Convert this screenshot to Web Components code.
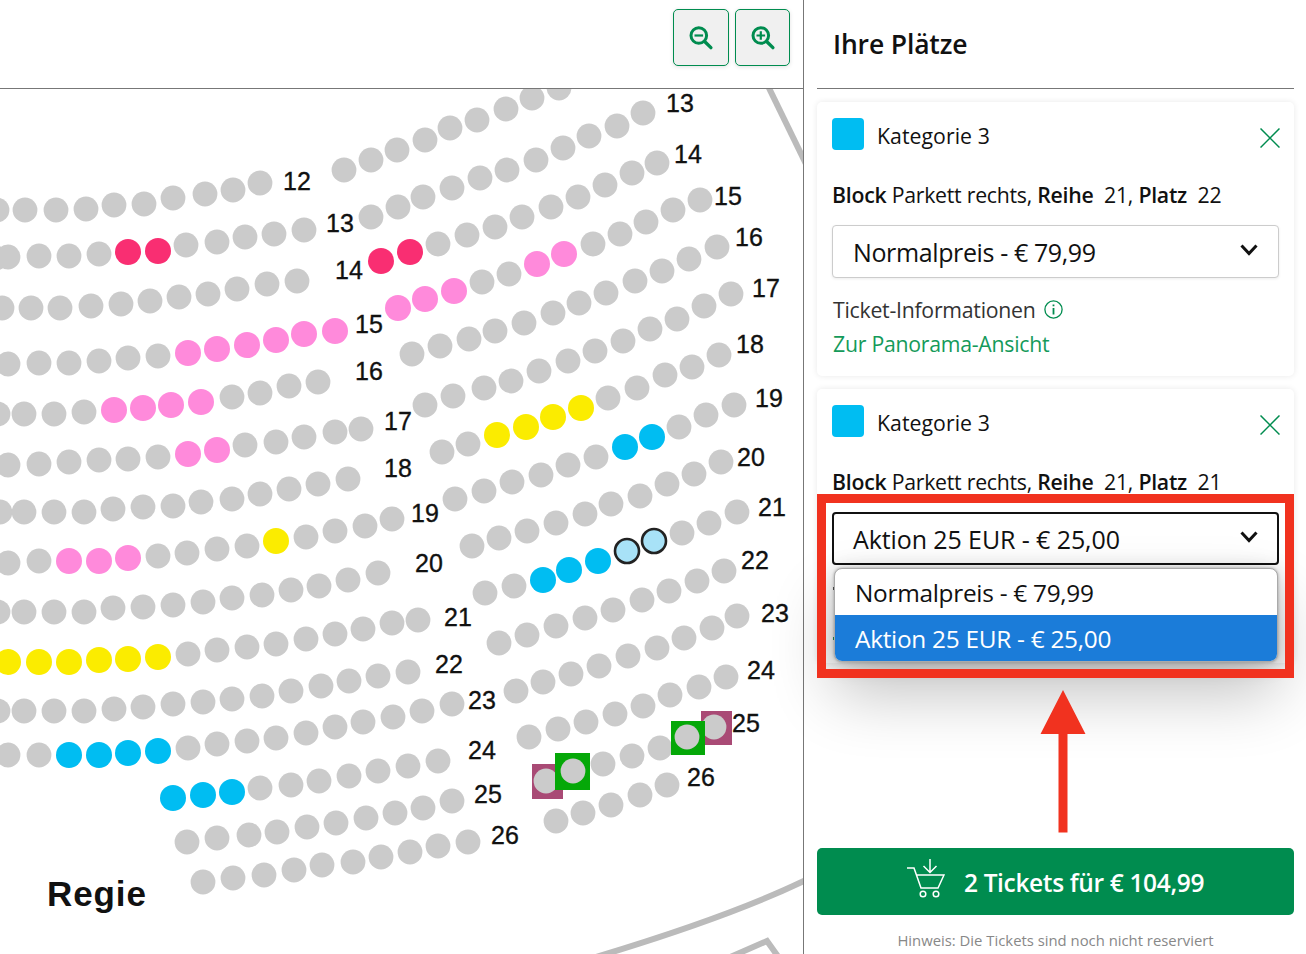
<!DOCTYPE html>
<html lang="de">
<head>
<meta charset="utf-8">
<title>Ihre Plätze</title>
<style>
    html, body { margin: 0; height: 100%; background: #fff; overflow: hidden; }
    body { font-family: "Open Sans", "Noto Sans", sans-serif; color: #111; }
</style>
</head>
<body>
<ticket-page>
    <seat-map slot="map"></seat-map>
    <zoom-toolbar slot="toolbar"></zoom-toolbar>
    <seat-panel slot="panel">
        <ticket-card block="Parkett rechts" row="21" seat="22" price="Normalpreis - € 79,99"></ticket-card>
        <ticket-card block="Parkett rechts" row="21" seat="21" price="Aktion 25 EUR - € 25,00" open></ticket-card>
    </seat-panel>
    <red-callout slot="callout"></red-callout>
</ticket-page>

<script>
// Seat rows of the hall plan. Suffix on a seat: r red, p pink, y yellow, b blue, s selected
const SEAT_ROWS = [
    // left block
    '-3,210 25,210 56,210 86,209 114,205 144,204 173,198 205,194 233,190 260,183',
    '-4,258 8,257 39,256 69,256 99,254 128,252r 158,251r 186,245 217,242 245,237 274,234 304,230',
    '2,308 31,308 60,308 91,306 121,304 150,301 179,297 208,294 237,289 267,284 297,281',
    '8,364 39,363 69,363 99,361 128,358 158,356 188,353p 217,349p 247,345p 276,340p 304,334p 335,331p',
    '-2,414 24,414 54,414 84,412 114,410p 143,408p 171,405p 201,402p 232,397 260,393 289,386 318,382',
    '8,465 39,464 69,462 99,460 128,459 158,457 188,454p 217,450p 245,445 276,442 304,437 335,432 361,429',
    '0,512 24,512 54,512 84,512 113,509 143,507 173,506 201,502 232,499 260,494 289,489 318,484 348,479',
    '8,563 39,561 69,561p 99,561p 128,558p 158,556 187,553 217,549 247,546 276,541y 306,537 335,531 365,526 392,519',
    '-2,612 24,612 54,612 84,612 113,608 143,607 173,605 203,602 232,598 262,595 291,590 319,586 348,580 378,573',
    '8,662y 39,662y 69,662y 99,660y 128,659y 158,657y 188,654 217,650 247,647 276,644 306,639 335,634 363,629 392,623 418,620',
    '-2,711 24,711 54,711 84,711 114,709 143,707 173,704 203,702 232,699 262,696 291,691 321,686 349,681 378,676 408,672',
    '8,755 39,755 69,755b 99,755b 128,753b 158,751b 188,748 217,744 247,741 276,738 306,733 335,727 363,722 393,717 422,711 452,704',
    '173,798b 203,795b 232,792b 260,788 291,785 319,781 349,776 378,771 408,766 438,761',
    '187,842 217,838 249,835 277,832 307,827 336,823 366,818 395,813 423,808 452,801',
    '203,882 233,878 264,875 294,870 322,865 353,862 381,857 410,852 438,846 468,842',
    // right block
    '344,170 371,160 397,150 425,140 450,128 477,120 506,109 532,98 559,88',
    '371,217 398,207 423,197 452,188 480,178 507,170 536,160 563,148 589,136 617,126 643,113',
    '381,261r 410,252r 438,244 467,235 495,227 522,217 551,207 578,197 605,185 632,173 657,163',
    '398,308p 425,299p 454,291p 482,282 509,274 537,264p 564,254p 593,244 620,234 646,222 673,210 700,200',
    '412,354 440,346 469,339 495,331 524,323 553,313 579,303 606,293 635,281 662,271 689,259 717,247',
    '425,405 453,396 484,388 511,381 539,371 568,361 595,351 623,341 650,329 677,319 704,306 731,294',
    '442,452 468,444 497,435y 526,427y 553,417y 581,408y 608,398 637,388 665,375 692,367 719,355',
    '455,499 484,491 512,482 541,475 568,465 596,457 625,447b 652,437b 679,427 706,415 734,405',
    '472,546 499,538 527,531 556,523 585,514 611,504 640,496 667,484 694,474 721,462',
    '485,593 514,586 543,580b 569,570b 598,561b 627,551s 654,541s 682,533 709,523 737,512',
    '499,643 527,635 556,626 585,618 613,610 642,600 669,591 697,581 724,571',
    '516,691 543,682 571,674 599,666 628,656 657,648 684,638 712,628 737,616',
    '529,737 558,729 586,722 615,714 643,706 670,695 699,687 726,677',
    '603,764 632,756 660,748',
    '556,821 583,813 611,805 640,795 667,785'
];

// Row numbers at the ends of the rows, [text, centre x, centre y]
const ROW_LABELS = [
    ['12', 297, 181], ['13', 340, 223], ['14', 349, 270], ['15', 369, 324], ['16', 369, 371],
    ['17', 398, 421], ['18', 398, 468], ['19', 425, 513], ['20', 429, 563], ['21', 458, 617],
    ['22', 449, 664], ['23', 482, 700], ['24', 482, 750], ['25', 488, 794], ['26', 505, 835],
    ['13', 680, 103], ['14', 688, 154], ['15', 728, 196], ['16', 749, 237], ['17', 766, 288],
    ['18', 750, 344], ['19', 769, 398], ['20', 751, 457], ['21', 772, 507], ['22', 755, 560],
    ['23', 775, 613], ['24', 761, 670], ['25', 746, 723], ['26', 701, 777]
];

// Wheelchair and companion seats: square under a grey seat
const MARKED_SEATS = [
    { x: 532, y: 764, w: 31, h: 35, fill: '#a94a75', cx: 546, cy: 781 },
    { x: 555, y: 753, w: 35, h: 37, fill: '#05a808', cx: 573, cy: 771 },
    { x: 701, y: 711, w: 31, h: 34, fill: '#a94a75', cx: 714, cy: 727 },
    { x: 671, y: 721, w: 34, h: 34, fill: '#05a808', cx: 687, cy: 737 }
];

const SEAT_COLORS = { r: '#f92e72', p: '#ff8adb', y: '#fbec00', b: '#00bdf2' };

class TicketPage extends HTMLElement {
    constructor() {
        super();
        this.attachShadow({ mode: 'open' });
        this.shadowRoot.innerHTML = `
            <style>
                :host { display: flex; width: 1306px; height: 954px; position: relative; overflow: hidden; }
                .left {
                    width: 803px;
                    flex: none;
                    display: flex;
                    flex-direction: column;
                    border-right: 1px solid #777;
                }
                .top {
                    flex: none;
                    border-bottom: 1px solid #777;
                    display: flex;
                    justify-content: flex-end;
                    padding: 9px 13px 0 0;
                    height: 79px;
                }
                .canvas { flex: 1; position: relative; overflow: hidden; }
                .right { flex: 1; position: relative; z-index: 1; min-width: 0; }
            </style>
            <div class="left">
                <div class="top"><slot name="toolbar"></slot></div>
                <div class="canvas"><slot name="map"></slot></div>
            </div>
            <div class="right"><slot name="panel"></slot></div>
            <slot name="callout"></slot>
        `;
    }
}

class ZoomToolbar extends HTMLElement {
    constructor() {
        super();
        this.attachShadow({ mode: 'open' });
        this.shadowRoot.innerHTML = `
            <style>
                :host { display: flex; gap: 6px; align-items: flex-start; }
                button {
                    width: 56px;
                    height: 57px;
                    padding: 0;
                    background: #f0f0f0;
                    border: 1px solid #008c4f;
                    border-radius: 5px;
                    box-shadow: 0 1px 4px rgba(0, 0, 0, .12);
                    display: flex;
                    align-items: center;
                    justify-content: center;
                }
                svg { width: 26px; height: 28px; fill: none; stroke: #008c4f; stroke-width: 3; }
                .handle { stroke-width: 3.4; stroke-linecap: round; }
                .thin { stroke-width: 2.2; }
            </style>
            <button aria-label="Verkleinern">
                <svg viewBox="0 0 26 28">
                    <circle cx="10.8" cy="11.5" r="7.8"/>
                    <path class="handle" d="M16.9 17.8 L22.9 23.6"/>
                    <path class="thin" d="M6.5 11.5 H15.1"/>
                </svg>
            </button>
            <button aria-label="Vergrößern" style="width:55px">
                <svg viewBox="0 0 26 28">
                    <circle cx="10.8" cy="11.5" r="7.8"/>
                    <path class="handle" d="M16.9 17.8 L22.9 23.6"/>
                    <path class="thin" d="M6.5 11.5 H15.1 M10.8 7.2 V15.8"/>
                </svg>
            </button>
        `;
    }
}

class SeatMap extends HTMLElement {
    constructor() {
        super();
        this.attachShadow({ mode: 'open' });
    }

    connectedCallback() {
        this.render();
    }

    render() {
        let seats = '';
        SEAT_ROWS.forEach(row => {
            row.split(' ').forEach(token => {
                const match = token.match(/^(-?\d+),(\d+)([a-z]?)$/);
                const x = match[1], y = match[2], kind = match[3];
                if (kind === 's') {
                    seats += `<circle cx="${x}" cy="${y}" r="12" fill="#a8e2f7" stroke="#222" stroke-width="2.6"/>`;
                } else if (kind) {
                    seats += `<circle cx="${x}" cy="${y}" r="13" fill="${SEAT_COLORS[kind]}"/>`;
                } else {
                    seats += `<circle cx="${x}" cy="${y}" r="12.4" fill="#cbcbcb"/>`;
                }
            });
        });

        const marked = MARKED_SEATS.map(m => `
            <rect x="${m.x}" y="${m.y}" width="${m.w}" height="${m.h}" fill="${m.fill}"/>
            <circle cx="${m.cx}" cy="${m.cy}" r="12.4" fill="#cbcbcb"/>
        `).join('');

        const labels = ROW_LABELS.map(([text, x, y]) =>
            `<text x="${x}" y="${y + 9}" text-anchor="middle">${text}</text>`).join('');

        this.shadowRoot.innerHTML = `
            <style>
                :host { display: block; position: absolute; inset: 0; }
                svg { display: block; width: 100%; height: 100%; }
                text { font-family: "Liberation Sans", Arial, sans-serif; font-size: 25px; fill: #111; stroke: #111; stroke-width: .35px; }
                .regie { font-weight: 700; font-size: 35px; letter-spacing: .9px; stroke: none; }
            </style>
            <svg viewBox="0 89 803 865">
                <g fill="none" stroke="#bbb" stroke-width="6">
                    <path d="M768 86 L806 164"/>
                    <path d="M586 960 C 660 938, 740 912, 806 880"/>
                    <path d="M728 958 L767 941 L782 962"/>
                </g>
                ${seats}
                ${marked}
                ${labels}
                <text class="regie" x="47" y="906">Regie</text>
            </svg>
        `;
    }
}

class SeatPanel extends HTMLElement {
    constructor() {
        super();
        this.attachShadow({ mode: 'open' });
        this.shadowRoot.innerHTML = `
            <style>
                :host {
                    display: flex;
                    flex-direction: column;
                    height: 954px;
                    padding: 0 12px 0 13px;
                    box-sizing: border-box;
                }
                h2 {
                    margin: 0;
                    height: 88px;
                    flex: none;
                    border-bottom: 1px solid #777;
                    padding-left: 16px;
                    font-size: 26.5px;
                    font-weight: 600;
                    line-height: 88px;
                    letter-spacing: -.15px;
                    color: #111;
                }
                .cards { display: flex; flex-direction: column; gap: 13px; padding-top: 13px; }
                .buy {
                    margin-top: auto;
                    height: 66px;
                    padding-top: 1px;
                    flex: none;
                    background: #008c4f;
                    border-radius: 5px;
                    color: #fff;
                    display: flex;
                    align-items: center;
                    justify-content: center;
                    gap: 19px;
                    font-size: 24.5px;
                    font-weight: 600;
                    letter-spacing: -.35px;
                }
                .buy svg { width: 38px; height: 40px; fill: none; stroke: #fff; stroke-width: 1.5; margin-top: -9px; }
                .hint {
                    flex: none;
                    height: 39px;
                    line-height: 51px;
                    text-align: center;
                    font-size: 14.85px;
                    color: #888;
                    white-space: nowrap;
                }
            </style>
            <h2>Ihre Plätze</h2>
            <div class="cards"><slot></slot></div>
            <div class="buy">
                <svg viewBox="0 0 38 40">
                    <path d="M0 10 H7 L14 30 H31 L37 17 H9"/>
                    <circle cx="16" cy="36" r="2.8"/>
                    <circle cx="29" cy="36" r="2.8"/>
                    <path d="M23 1 V14 M16.5 8 L23 14.5 L29.5 8"/>
                </svg>
                <span>2 Tickets für € 104,99</span>
            </div>
            <div class="hint">Hinweis: Die Tickets sind noch nicht reserviert</div>
        `;
    }
}

class TicketCard extends HTMLElement {
    constructor() {
        super();
        this.attachShadow({ mode: 'open' });
    }

    connectedCallback() {
        const block = this.getAttribute('block');
        const row = this.getAttribute('row');
        const seat = this.getAttribute('seat');
        const price = this.getAttribute('price');
        const open = this.hasAttribute('open');

        // Under an open dropdown only the first pixels of these two lines peek out
        const details = open ? `
            <i class="sliver" style="top:198px;background:#555"></i>
            <i class="sliver" style="top:248px;background:#2a9c66"></i>
        ` : `
            <div class="info">Ticket-Informationen
                <svg viewBox="0 0 19 19"><circle cx="9.5" cy="9.5" r="8.6"/><path d="M9.5 8 V14.5 M9.5 4.6 V6.2" stroke-width="1.8"/></svg>
            </div>
            <div class="link">Zur Panorama-Ansicht</div>
        `;

        this.shadowRoot.innerHTML = `
            <style>
                :host {
                    display: block;
                    height: 274px;
                    box-sizing: border-box;
                    background: #fff;
                    border-radius: 5px;
                    box-shadow: 0 0 6px rgba(0, 0, 0, .09);
                    padding: 16px 15px 0 15px;
                    position: relative;
                    font-size: 21.25px;
                    letter-spacing: -.25px;
                }
                .head { display: flex; align-items: flex-start; height: 61px; }
                .swatch { width: 32px; height: 32px; background: #00bdf2; border-radius: 4px; flex: none; }
                .name { margin-left: 13px; line-height: 36px; font-weight: 500; flex: 1; letter-spacing: .05px; color: #111; }
                .close { width: 20px; height: 20px; margin: 10px -.5px 0 0; flex: none; fill: none; stroke: #008c4f; stroke-width: 1.5; }
                .place { height: 46px; line-height: 31px; white-space: pre; }
                b { font-weight: 600; }
                .info { margin-top: 14px; line-height: 35px; color: #333; padding-left: 1px; display: flex; align-items: center; gap: 8px; }
                .info svg { width: 19px; height: 19px; fill: none; stroke: #008c4f; stroke-width: 1.3; }
                .link { line-height: 34px; color: #149a5a; padding-left: 1px; }
                .sliver { position: absolute; left: 16px; width: 1px; height: 3px; }
            </style>
            <div class="head">
                <div class="swatch"></div>
                <div class="name">Kategorie 3</div>
                <svg class="close" viewBox="0 0 20 20"><path d="M.5 .5 L19.5 19.5 M19.5 .5 L.5 19.5"/></svg>
            </div>
            <div class="place"><b>Block</b> ${block}, <b>Reihe</b>  ${row}, <b>Platz</b>  ${seat}</div>
            <price-select value="${price}" ${open ? 'open' : ''}></price-select>
            ${details}
        `;
    }
}

class PriceSelect extends HTMLElement {
    constructor() {
        super();
        this.attachShadow({ mode: 'open' });
    }

    connectedCallback() {
        const value = this.getAttribute('value');
        const open = this.hasAttribute('open');
        const options = ['Normalpreis - € 79,99', 'Aktion 25 EUR - € 25,00'];

        this.shadowRoot.innerHTML = `
            <style>
                :host { display: block; position: relative; font-size: 25px; letter-spacing: -.28px; color: #111; }
                .box {
                    height: 53px;
                    box-sizing: border-box;
                    background: #fff;
                    border: 1px solid #ccc;
                    border-radius: 4px;
                    box-shadow: 0 1px 3px rgba(0, 0, 0, .08);
                    display: flex;
                    align-items: center;
                    justify-content: space-between;
                    padding: 0 20px;
                }
                .box span { font-weight: 500; letter-spacing: -.38px; }
                :host([open]) .box { border: 2px solid #111; padding: 0 19px; box-shadow: none; }
                :host([open]) .box span { letter-spacing: -.1px; }
                .box svg { width: 18px; height: 12px; fill: none; stroke: #111; stroke-width: 3; margin-top: -4px; }
                .popup {
                    position: absolute;
                    z-index: 5;
                    left: 2px;
                    right: 1px;
                    top: 56px;
                    height: 94px;
                    box-sizing: border-box;
                    border: 1px solid #aaa;
                    border-radius: 8px;
                    background: #fff;
                    overflow: hidden;
                    font-size: 24.4px;
                    box-shadow: 0 32px 64px rgba(0, 0, 0, .24), 0 2px 21px rgba(0, 0, 0, .2), 0 0 3px rgba(0, 0, 0, .3);
                }
                .option { height: 46px; line-height: 47px; padding-left: 20px; white-space: nowrap; }
                .option.active { background: #1b7cd9; color: #fff; }
            </style>
            <div class="box">
                <span>${value}</span>
                <svg viewBox="0 0 18 12"><path d="M1.5 1.5 L9 9.5 L16.5 1.5"/></svg>
            </div>
            ${open ? `<div class="popup">
                ${options.map(o => `<div class="option ${o === value ? 'active' : ''}">${o}</div>`).join('')}
            </div>` : ''}
        `;
    }
}

class RedCallout extends HTMLElement {
    constructor() {
        super();
        this.attachShadow({ mode: 'open' });
        this.shadowRoot.innerHTML = `
            <style>
                :host { display: block; position: absolute; left: 0; top: 0; z-index: 10; pointer-events: none; }
                .frame {
                    position: absolute;
                    left: 817px;
                    top: 494px;
                    width: 477px;
                    height: 184px;
                    box-sizing: border-box;
                    border: 9px solid #f1321f;
                }
                svg { position: absolute; left: 1036px; top: 688px; width: 54px; height: 146px; }
            </style>
            <div class="frame"></div>
            <svg viewBox="0 0 54 146"><path fill="#f1321f" d="M27 2 L49.5 46 H31.5 V144.5 H22.5 V46 H4.5 Z"/></svg>
        `;
    }
}

customElements.define('ticket-page', TicketPage);
customElements.define('zoom-toolbar', ZoomToolbar);
customElements.define('seat-map', SeatMap);
customElements.define('seat-panel', SeatPanel);
customElements.define('price-select', PriceSelect);
customElements.define('ticket-card', TicketCard);
customElements.define('red-callout', RedCallout);
</script>
</body>
</html>
